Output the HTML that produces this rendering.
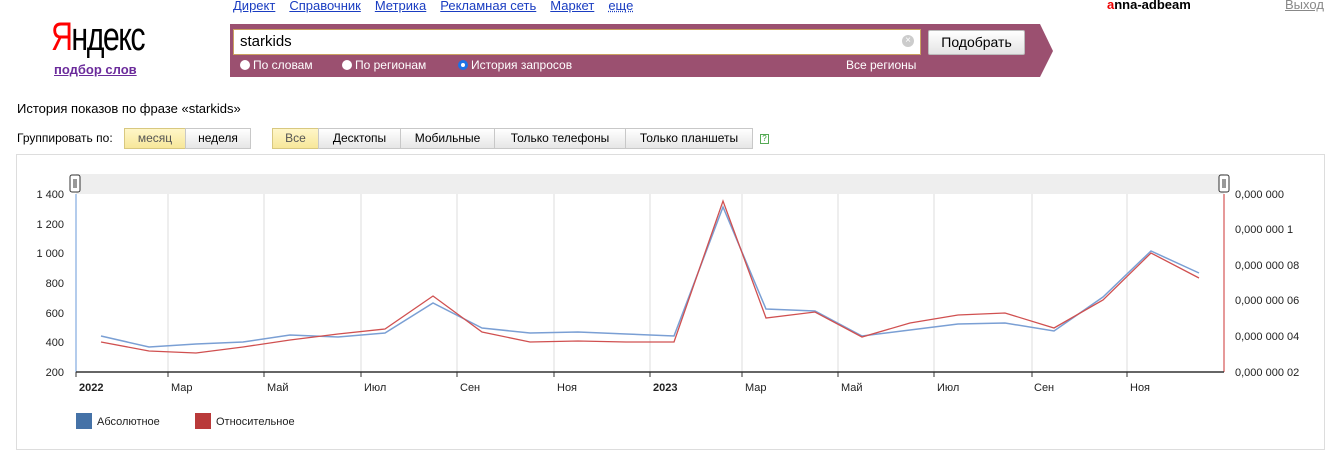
<!DOCTYPE html>
<html><head><meta charset="utf-8"><style>
*{margin:0;padding:0;box-sizing:border-box}
body{width:1340px;height:467px;background:#fff;font-family:"Liberation Sans",Arial,sans-serif;position:relative;overflow:hidden;color:#000}
.a{position:absolute;white-space:nowrap}
.top a{color:#1a3dc1;text-decoration:underline;font-size:13px;margin-right:14px}
.btn{position:absolute;top:128px;height:21px;border:1px solid #c8c8c8;background:linear-gradient(#fff,#e6e6e6);font-size:12px;text-align:center;line-height:19px;color:#000}
.on{background:linear-gradient(#fff6c8,#f7e79a);color:#555;border-color:#d8c880}
.radio{display:inline-block;width:10px;height:10px;border-radius:50%;background:#fff;vertical-align:-1px;margin-right:3px}
</style></head><body>
<div class="a top" style="left:233px;top:-3px">
<a>Директ</a><a>Справочник</a><a>Метрика</a><a>Рекламная сеть</a><a>Маркет</a><a style="text-decoration:underline dotted">еще</a></div>
<div class="a" style="left:1107px;top:-3px;font-size:13px;font-weight:bold"><span style="color:#e00">a</span>nna-adbeam</div>
<div class="a" style="left:1285px;top:-3px;font-size:13px;color:#888;text-decoration:underline">Выход</div>
<div class="a" style="left:51px;top:15px;font-size:40px;letter-spacing:-2px;transform:scaleX(0.76);transform-origin:left"><span style="color:#f00">Я</span>ндекс</div>
<div class="a" style="left:54px;top:62px;font-size:13px;font-weight:bold;color:#6b2b9b;text-decoration:underline">подбор слов</div>
<svg class="a" style="left:230px;top:24px" width="825" height="54"><polygon points="0,0 810,0 823,27 810,53 0,53" fill="#9b5070"/></svg>
<div class="a" style="left:233px;top:29px;width:688px;height:26px;background:#fff;border:1px solid #c9a060;font-size:15px;padding:3px 6px">starkids</div>
<div class="a" style="left:902px;top:35px;width:12px;height:12px;border-radius:50%;background:#ccc;color:#fff;font-size:10px;line-height:12px;text-align:center">×</div>
<div class="a" style="left:928px;top:30px;width:97px;height:25px;border:1px solid #bbb;border-radius:2px;background:linear-gradient(#fff,#e4e4e4);font-size:14px;text-align:center;line-height:23px">Подобрать</div>
<div class="a" style="left:240px;top:58px;font-size:12px;color:#fff"><span class="radio"></span>По словам</div>
<div class="a" style="left:342px;top:58px;font-size:12px;color:#fff"><span class="radio"></span>По регионам</div>
<div class="a" style="left:458px;top:58px;font-size:12px;color:#fff"><span class="radio" style="background:#fff;border:3px solid #1a73e8"></span>История запросов</div>
<div class="a" style="left:846px;top:58px;font-size:12px;color:#fff">Все регионы</div>
<div class="a" style="left:17px;top:101px;font-size:13px">История показов по фразе «starkids»</div>
<div class="a" style="left:17px;top:131px;font-size:12px">Группировать по:</div>
<div class="btn on" style="left:124px;width:62px">месяц</div>
<div class="btn" style="left:185px;width:66px">неделя</div>
<div class="btn on" style="left:272px;width:47px">Все</div>
<div class="btn" style="left:318px;width:83px">Десктопы</div>
<div class="btn" style="left:400px;width:95px">Мобильные</div>
<div class="btn" style="left:494px;width:132px">Только телефоны</div>
<div class="btn" style="left:625px;width:128px">Только планшеты</div>
<div class="a" style="left:760px;top:134px;width:9px;height:10px;border:1px solid #5a5;font-size:8px;line-height:8px;text-align:center;color:#393">?</div>
<div class="a" style="left:16px;top:154px;width:1309px;height:296px;border:1px solid #ddd"></div>
<svg class="a" style="left:0;top:0" width="1340" height="467" font-family="Liberation Sans,Arial,sans-serif" font-size="11">
<rect x="76" y="174" width="1148" height="20" fill="#eee"/>
<g stroke="#ddd">
<line x1="168" y1="194" x2="168" y2="372"/><line x1="264" y1="194" x2="264" y2="372"/><line x1="361" y1="194" x2="361" y2="372"/><line x1="457" y1="194" x2="457" y2="372"/><line x1="554" y1="194" x2="554" y2="372"/><line x1="650" y1="194" x2="650" y2="372"/><line x1="742" y1="194" x2="742" y2="372"/><line x1="838" y1="194" x2="838" y2="372"/><line x1="934" y1="194" x2="934" y2="372"/><line x1="1032" y1="194" x2="1032" y2="372"/><line x1="1127" y1="194" x2="1127" y2="372"/>
</g>
<line x1="76" y1="194" x2="76" y2="372" stroke="#6a9ad8"/>
<line x1="1224" y1="194" x2="1224" y2="372" stroke="#c33"/>
<line x1="76" y1="372" x2="1224" y2="372" stroke="#333" stroke-width="1.5"/>
<g stroke="#333"><line x1="76" y1="372" x2="76" y2="377"/><line x1="168" y1="372" x2="168" y2="377"/><line x1="264" y1="372" x2="264" y2="377"/><line x1="361" y1="372" x2="361" y2="377"/><line x1="457" y1="372" x2="457" y2="377"/><line x1="554" y1="372" x2="554" y2="377"/><line x1="650" y1="372" x2="650" y2="377"/><line x1="742" y1="372" x2="742" y2="377"/><line x1="838" y1="372" x2="838" y2="377"/><line x1="934" y1="372" x2="934" y2="377"/><line x1="1032" y1="372" x2="1032" y2="377"/><line x1="1127" y1="372" x2="1127" y2="377"/></g>
<g text-anchor="end" fill="#222"><text x="64" y="198">1 400</text><text x="64" y="228">1 200</text><text x="64" y="257">1 000</text><text x="64" y="287">800</text><text x="64" y="317">600</text><text x="64" y="346">400</text><text x="64" y="376">200</text></g>
<g fill="#222"><text x="1235" y="198">0,000 000</text><text x="1235" y="233">0,000 000 1</text><text x="1235" y="269">0,000 000 08</text><text x="1235" y="304">0,000 000 06</text><text x="1235" y="340">0,000 000 04</text><text x="1235" y="376">0,000 000 02</text></g>
<g fill="#222"><text x="79" y="391" font-weight="bold">2022</text><text x="171" y="391">Мар</text><text x="267" y="391">Май</text><text x="364" y="391">Июл</text><text x="460" y="391">Сен</text><text x="557" y="391">Ноя</text><text x="653" y="391" font-weight="bold">2023</text><text x="745" y="391">Мар</text><text x="841" y="391">Май</text><text x="937" y="391">Июл</text><text x="1034" y="391">Сен</text><text x="1130" y="391">Ноя</text></g>
<polyline fill="none" stroke="#7a9fd4" stroke-width="1.5" points="101,336 149,347 196,344 243,342 290,335 338,337 385,333 433,303 482,328 530,333 578,332 626,334 674,336 723,207 766,309 815,311 862,336 910,330 958,324 1005,323 1054,331 1103,297 1151,251 1199,273"/>
<polyline fill="none" stroke="#d05050" stroke-width="1.3" points="101,342 149,351 196,353 243,347 290,340 338,334 385,329 433,296 482,332 530,342 578,341 626,342 674,342 723,201 766,318 815,312 862,337 910,323 958,315 1005,313 1054,328 1103,300 1151,253 1199,278"/>
<g fill="#fff" stroke="#333"><rect x="70" y="175" width="10" height="17" rx="2"/><rect x="1219" y="175" width="10" height="17" rx="2"/></g>
<g stroke="#333"><line x1="74" y1="179" x2="74" y2="188"/><line x1="76" y1="179" x2="76" y2="188"/><line x1="1223" y1="179" x2="1223" y2="188"/><line x1="1225" y1="179" x2="1225" y2="188"/></g>
<rect x="76" y="413" width="16" height="16" fill="#4572a7"/><text x="97" y="425" fill="#222">Абсолютное</text>
<rect x="195" y="413" width="16" height="16" fill="#b93a3a"/><text x="216" y="425" fill="#222">Относительное</text>
</svg>
</body></html>
